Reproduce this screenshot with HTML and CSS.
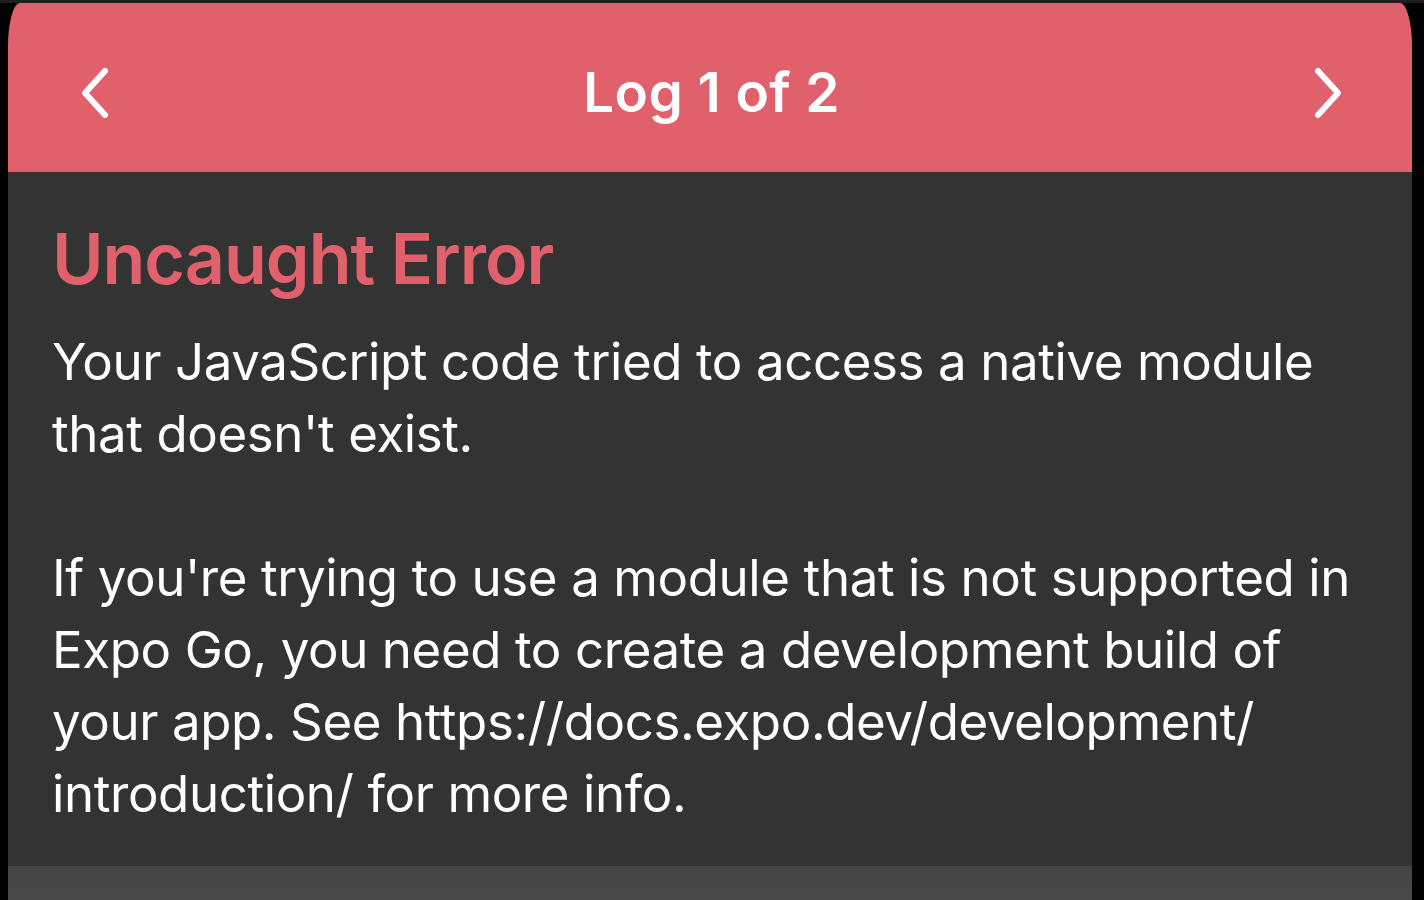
FILE: index.html
```html
<!DOCTYPE html>
<html lang="en">

<head>
    <meta charset="UTF-8">
    <meta name="viewport" content="width=device-width, initial-scale=1.0">
    <title>Log 1 of 2</title>
    <link rel="stylesheet" href="styles.css">
</head>

<body>

    <div class="topStrip"></div>
    <div class="frame">
        <div class="header">
            <button class="navBtn" aria-label="previous">
                <svg width="40" height="56" viewBox="0 0 40 56">
                    <path d="M28 6 L8 28 L28 50" fill="none" stroke="#fff" stroke-width="6" stroke-linecap="round" stroke-linejoin="round" />
                </svg>
            </button>
            <div class="logTitle">Log 1 of 2</div>
            <button class="navBtn" aria-label="next">
                <svg width="40" height="56" viewBox="0 0 40 56">
                    <path d="M12 6 L32 28 L12 50" fill="none" stroke="#fff" stroke-width="6" stroke-linecap="round" stroke-linejoin="round" />
                </svg>
            </button>
        </div>
        <div class="content">
            <div class="errTitle">Uncaught Error</div>
            <div class="errMsg">
                <div class="line">Your JavaScript code tried to access a native module</div>
                <div class="line">that doesn't exist.</div>
                <div class="line">&nbsp;</div>
                <div class="line">If you're trying to use a module that is not supported in</div>
                <div class="line">Expo Go, you need to create a development build of</div>
                <div class="line">your app. See https://docs.expo.dev/development/</div>
                <div class="line">introduction/ for more info.</div>
            </div>
        </div>
        <div class="footer"></div>
    </div>

</body>

</html>
```

FILE: styles.css
```css
body {
    background-color: #000;
    margin: 0;
    height: 900px;
    overflow: hidden;
    font-family: Inter, "Noto Sans", sans-serif;
}

.topStrip {
    height: 3px;
    background-color: #201e21;
}

.frame {
    margin: 0 12px 0 8px;
    display: flex;
    flex-direction: column;
    height: 897px;
    background-color: #333333;
    border-radius: 12px 12px 0 0 / 44px 44px 0 0;
    overflow: hidden;
}

.header {
    height: 169px;
    background-color: #e0606b;
    display: flex;
    flex-direction: row;
    align-items: center;
    justify-content: space-between;
    padding: 0 62px 0 64px;
    box-sizing: border-box;
}

.navBtn {
    background: none;
    border: none;
    padding: 0;
    display: flex;
    margin-top: 10px;
}

.navBtn:first-child {
    margin-left: 5px;
}

.navBtn:last-child {
    margin-right: 4px;
}

.logTitle {
    color: #fff;
    font-size: 55px;
    font-weight: 600;
    margin-top: 8px;
    letter-spacing: 0.4px;
}

.content {
    flex: 1;
    padding: 42px 40px 0 44px;
}

.errTitle {
    color: #e0606b;
    font-size: 70px;
    font-weight: 600;
    letter-spacing: -1px;
    line-height: 90px;
}

.errMsg {
    color: #fff;
    font-size: 51px;
    letter-spacing: -0.4px;
    line-height: 72px;
    margin-top: 22px;
}

.line {
    white-space: nowrap;
}

.footer {
    height: 34px;
    background: linear-gradient(#444444, #484848);
}
```
